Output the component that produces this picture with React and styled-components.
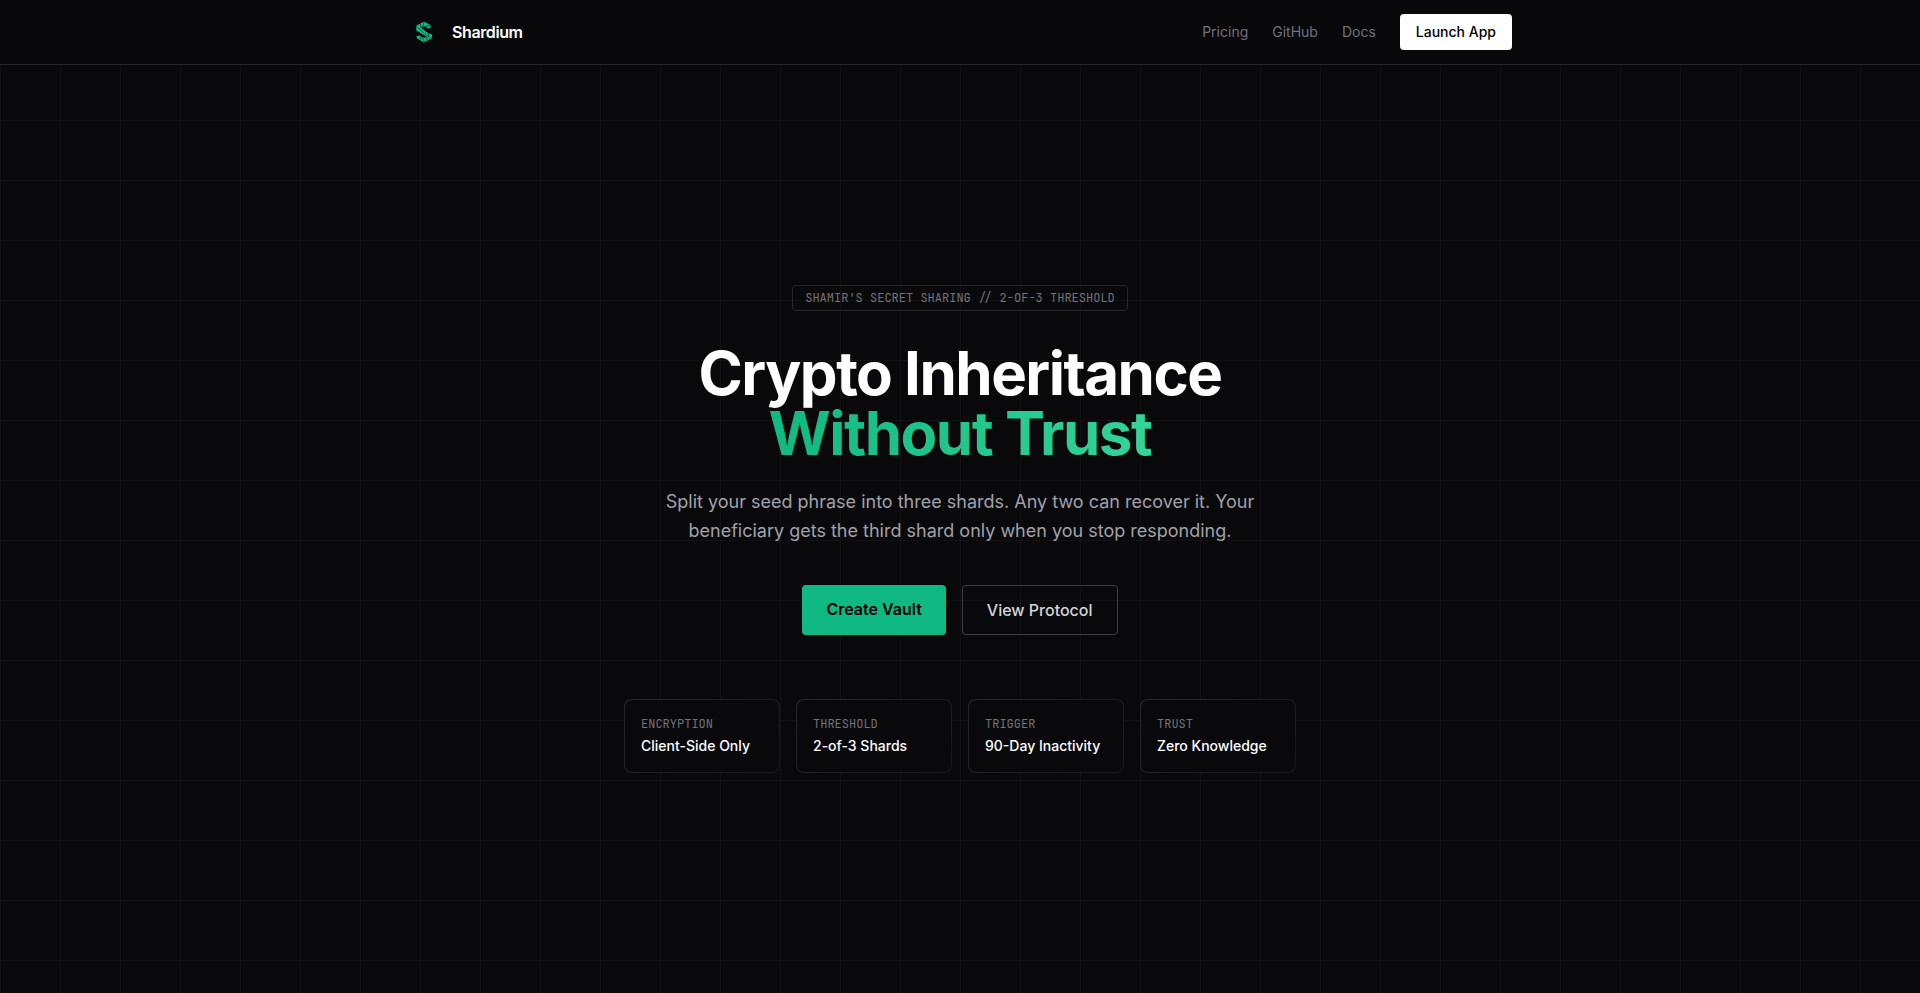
import React from "react";
import styled, { createGlobalStyle } from "styled-components";

const sans = `Inter, "Liberation Sans", sans-serif`;
const mono = `"JetBrains Mono", "Liberation Mono", monospace`;

const GlobalStyle = createGlobalStyle`
  *, *::before, *::after { box-sizing: border-box; }
  body {
    margin: 0;
    background-color: #09090b;
    background-image:
      linear-gradient(to right, rgba(255, 255, 255, 0.03) 1px, transparent 1px),
      linear-gradient(to bottom, rgba(255, 255, 255, 0.03) 1px, transparent 1px);
    background-size: 60px 60px;
    color: #fff;
    font-family: ${sans};
    font-size: 16px;
    line-height: 24px;
  }
  a { color: inherit; text-decoration: none; }
  h1, p, dl, dd { margin: 0; }
`;

const Page = styled.div`
  display: flex;
  flex-direction: column;
  min-height: 100vh;
`;

const Header = styled.header`
  background: #08080a;
  border-bottom: 1px solid #27272a;
`;

const HeaderInner = styled.div`
  display: flex;
  align-items: center;
  justify-content: space-between;
  max-width: 1152px;
  height: 64px;
  margin: 0 auto;
  padding: 0 24px;
`;

const Brand = styled.a`
  display: flex;
  align-items: center;
  gap: 12px;
  font-weight: 600;
  letter-spacing: -0.025em;
`;

const Nav = styled.nav`
  display: flex;
  align-items: center;
  gap: 24px;
  font-size: 14px;
  line-height: 20px;
`;

const NavLink = styled.a`
  color: #71717a;
  &:hover { color: #fff; }
`;

const LaunchLink = styled.a`
  padding: 8px 16px;
  border-radius: 4px;
  background: #fff;
  color: #000;
  font-weight: 500;
`;

const Hero = styled.main`
  display: flex;
  flex: 1;
  flex-direction: column;
  align-items: center;
  justify-content: center;
  padding: 48px 24px;
  text-align: center;
`;

const Badge = styled.div`
  margin-bottom: 32px;
  padding: 4px 12px;
  border: 1px solid #27272a;
  border-radius: 4px;
  color: #71717a;
  font-family: ${mono};
  font-size: 12px;
  line-height: 16px;
`;

const Title = styled.h1`
  margin-bottom: 24px;
  font-size: 60px;
  font-weight: 700;
  line-height: 60px;
  letter-spacing: -0.025em;
`;

const Accent = styled.span`
  background: linear-gradient(to right, #10b981, #34d399);
  background-clip: text;
  color: transparent;
`;

const Lead = styled.p`
  max-width: 640px;
  margin-bottom: 40px;
  color: #a1a1aa;
  font-size: 18px;
  line-height: 29px;
`;

const Actions = styled.div`
  display: flex;
  gap: 16px;
  margin-bottom: 64px;
`;

const Action = styled.a`
  padding: 12px 24px;
  border: ${(p) => (p.$primary ? "0" : "1px solid #3f3f46")};
  border-radius: 4px;
  background: ${(p) => (p.$primary ? "#10b981" : "transparent")};
  color: ${(p) => (p.$primary ? "#000" : "#d4d4d8")};
  font-weight: ${(p) => (p.$primary ? 600 : 500)};
`;

const Facts = styled.dl`
  display: grid;
  grid-template-columns: repeat(4, 1fr);
  gap: 16px;
  width: 100%;
  max-width: 672px;
  text-align: left;
`;

const Fact = styled.div`
  padding: 16px;
  border: 1px solid transparent;
  border-radius: 8px;
  background:
    linear-gradient(#09090b, #09090b) padding-box,
    linear-gradient(135deg, #27272a, #18181b) border-box;
`;

const FactLabel = styled.dt`
  margin-bottom: 4px;
  color: #71717a;
  font-family: ${mono};
  font-size: 12px;
  line-height: 16px;
`;

const FactValue = styled.dd`
  font-size: 14px;
  font-weight: 500;
  line-height: 20px;
  white-space: nowrap;
`;

const links = ["Pricing", "GitHub", "Docs"];

const facts = [
  ["ENCRYPTION", "Client-Side Only"],
  ["THRESHOLD", "2-of-3 Shards"],
  ["TRIGGER", "90-Day Inactivity"],
  ["TRUST", "Zero Knowledge"],
];

function Logo() {
  return (
    <svg width="32" height="32" viewBox="0 0 32 32" aria-hidden="true">
      <path
        fill="#10b981"
        d="M16 5.5 22.8 9.2V11.4L19.2 12.8 18.2 10.4H14.6L12.8 11.6 20.2 17.2 23.9 18.2V22L16 26.5 9.4 22.8 8.4 20.2 12 19.2 14 21.4H17.4L18.4 20.6 8.2 14.6V9.8Z"
      />
      <path
        fill="none"
        stroke="#08080a"
        strokeWidth="0.5"
        d="M8.6 10.6 22.4 22.6M12.8 11.6 12.4 7.8M14.6 10.4 16 5.8M18.2 10.4 22.6 9.4M20.2 17.2 20.8 21M18.4 20.6 19.4 24.4M14 21.4 16.6 26M12 19.2 12.4 24"
      />
    </svg>
  );
}

export default function App() {
  return (
    <Page>
      <GlobalStyle />
      <Header>
        <HeaderInner>
          <Brand href="#">
            <Logo />
            Shardium
          </Brand>
          <Nav>
            {links.map((label) => (
              <NavLink key={label} href="#">{label}</NavLink>
            ))}
            <LaunchLink href="#">Launch App</LaunchLink>
          </Nav>
        </HeaderInner>
      </Header>
      <Hero>
        <Badge>SHAMIR'S SECRET SHARING // 2-OF-3 THRESHOLD</Badge>
        <Title>
          Crypto Inheritance
          <br />
          <Accent>Without Trust</Accent>
        </Title>
        <Lead>
          Split your seed phrase into three shards. Any two can recover it. Your
          beneficiary gets the third shard only when you stop responding.
        </Lead>
        <Actions>
          <Action href="#" $primary>Create Vault</Action>
          <Action href="#">View Protocol</Action>
        </Actions>
        <Facts>
          {facts.map(([label, value]) => (
            <Fact key={label}>
              <FactLabel>{label}</FactLabel>
              <FactValue>{value}</FactValue>
            </Fact>
          ))}
        </Facts>
      </Hero>
    </Page>
  );
}
